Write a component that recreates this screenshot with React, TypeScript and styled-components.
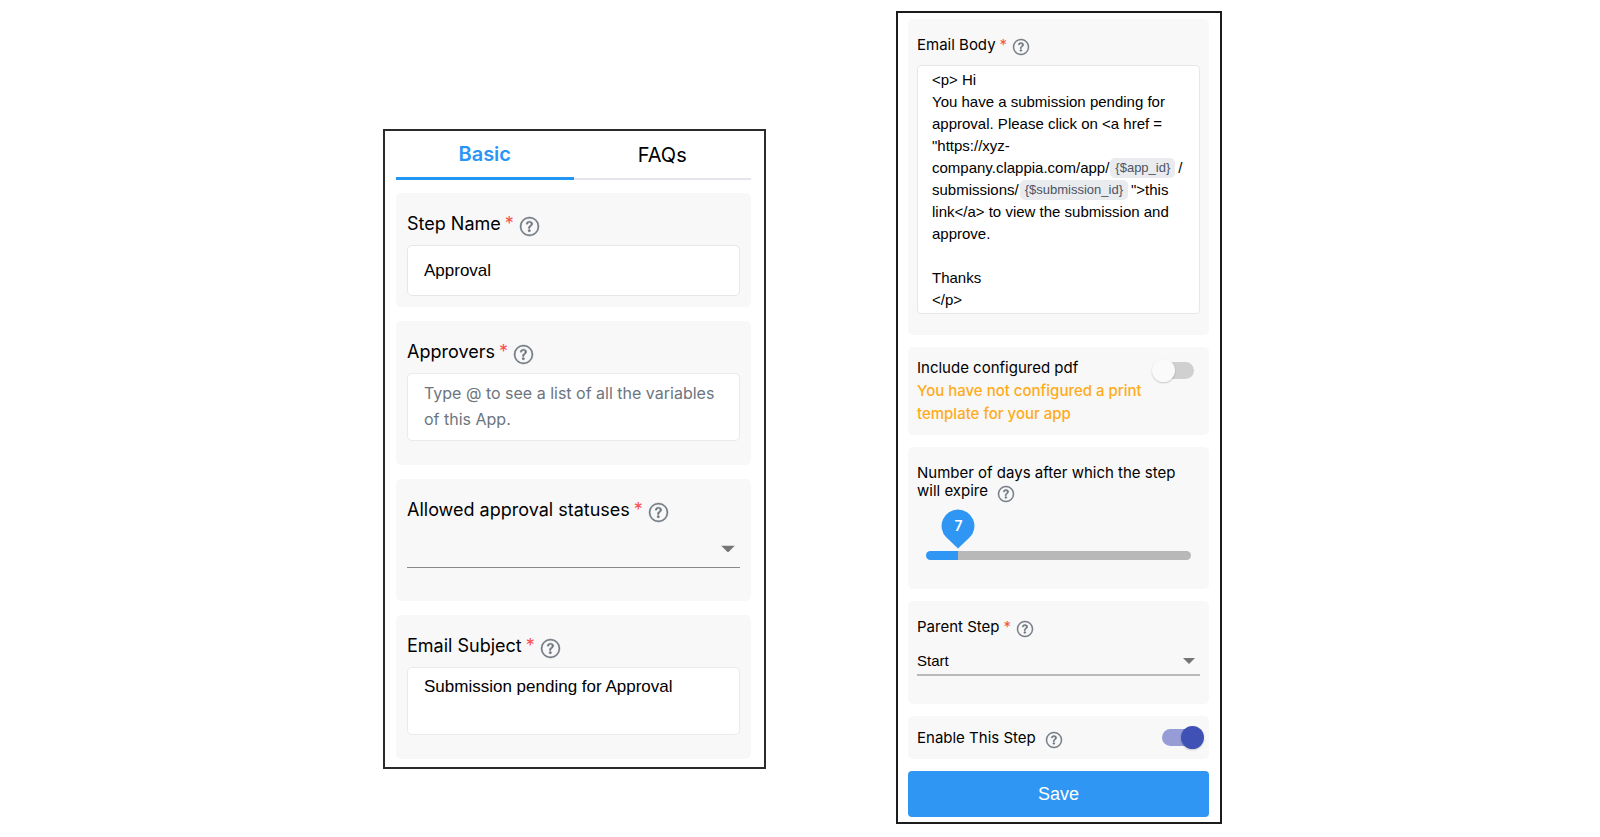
import React, { useState } from 'react';
import styled, { createGlobalStyle } from 'styled-components';
import { BsQuestionCircle } from 'react-icons/bs';

const ui = `Inter, "Open Sans", sans-serif`;
const entry = `"Liberation Sans", Arial, sans-serif`;

const GlobalStyle = createGlobalStyle`
  *, *::before, *::after { box-sizing: border-box; }
  body { margin: 0; background: #fff; color: #000; font-family: ${ui}; }
  button, input, select, textarea { font: inherit; color: inherit; margin: 0; }
`;

const Page = styled.main`
  display: flex;
  justify-content: center;
  align-items: flex-start;
  gap: 130px;
  padding: 11px 0 13px 5px;
`;

const StepPanel = styled.form`
  flex: 0 1 383px;
  margin-top: 118px;
  padding: 0 13px 8px 11px;
  border: 2px solid #2b2b2b;
  font-size: 18px;
`;

const EmailPanel = styled.form`
  flex: 0 1 326px;
  display: flex;
  flex-direction: column;
  gap: 12px;
  padding: 6px 11px 5px 10px;
  border: 2px solid #1c1c1c;
  font-size: 15px;
`;

const TabBar = styled.div`
  display: flex;
  height: 49px;
  margin-bottom: 13px;
`;

const Tab = styled.button<{ $active?: boolean }>`
  flex: 1;
  padding: 0;
  border: 0;
  border-bottom: ${(p) => (p.$active ? '3px solid #2196f3' : '2px solid #e4e6ec')};
  background: none;
  color: ${(p) => (p.$active ? '#2b95f5' : '#000')};
  font-size: 20px;
  font-weight: ${(p) => (p.$active ? 600 : 400)};
  cursor: pointer;
`;

const Stack = styled.div`
  display: flex;
  flex-direction: column;
  gap: 14px;
`;

const Card = styled.section<{ $pad: string }>`
  padding: ${(p) => p.$pad};
  border-radius: 5px;
  background: #f8f8f8;
`;

const LabelRow = styled.div<{ $h: number }>`
  display: flex;
  align-items: center;
  height: ${(p) => p.$h}px;
  margin-bottom: 11px;
`;

const Required = styled.span`
  margin-left: 4px;
  color: #f9504c;
`;

const HelpButton = styled.button<{ $size: number; $gap: number }>`
  display: inline-flex;
  padding: 0;
  margin: 4px 0 -2px ${(p) => p.$gap}px;
  border: 0;
  background: none;
  color: #6c757d;
  font-size: ${(p) => p.$size}px;
  vertical-align: top;
  cursor: pointer;
  svg { overflow: visible; stroke: currentColor; stroke-width: 0.4; }
`;

const TextInput = styled.input`
  display: block;
  width: 100%;
  height: 51px;
  padding: 0 16px;
  border: 1px solid #e6e7e9;
  border-radius: 5px;
  background: #fff;
  font-family: ${entry};
  font-size: 17px;
`;

const TextArea = styled.textarea`
  display: block;
  width: 100%;
  height: 68px;
  padding: 6px 16px;
  border: 1px solid #e9eaec;
  border-radius: 5px;
  background: #fff;
  font-family: ${entry};
  font-size: 17px;
  line-height: 26px;
  resize: none;
  overflow: hidden;
  &::placeholder { color: #6c757d; font-family: ${ui}; font-size: 16px; opacity: 1; }
`;

const BodyEditor = styled.div`
  min-height: 249px;
  padding: 3px 8px 2px 14px;
  border: 1px solid #e6e7e9;
  border-radius: 4px;
  background: #fff;
  font-family: ${entry};
  line-height: 22px;
`;

const Variable = styled.span`
  display: inline-block;
  height: 20px;
  margin: 1px 3px 0 1px;
  padding: 0 5px;
  border-radius: 5px;
  background: #e9ebef;
  color: #4b5563;
  font-size: 13px;
  line-height: 20px;
  vertical-align: top;
`;

const SelectBox = styled.div<{ $h: number; $line: string }>`
  display: flex;
  position: relative;
  height: ${(p) => p.$h}px;
  border-bottom: ${(p) => p.$line};
`;

const Select = styled.select`
  flex: 1;
  min-width: 0;
  padding: 0;
  border: 0;
  background: none;
  appearance: none;
  font-family: ${entry};
`;

const Caret = styled.svg`
  position: absolute;
  top: 50%;
  right: 5px;
  transform: translateY(-50%);
  pointer-events: none;
`;

const SwitchRow = styled.div<{ $align: string }>`
  display: flex;
  justify-content: space-between;
  align-items: ${(p) => p.$align};
`;

const SwitchText = styled.div`
  line-height: 23px;
`;

const Warning = styled.p`
  margin: 0;
  color: #ffab1a;
  font-weight: 500;
`;

const Switch = styled.input`
  && { margin: ${(p) => (p.defaultChecked ? '0' : '3px 6px 0 0')}; }
  flex: none;
  position: relative;
  width: 42px;
  height: 23px;
  appearance: none;
  cursor: pointer;
  &::before {
    content: '';
    position: absolute;
    inset: 3px 0 3px 6px;
    border-radius: 9px;
    background: #d0d0d0;
  }
  &::after {
    content: '';
    position: absolute;
    top: 0;
    left: 0;
    width: 23px;
    height: 23px;
    border-radius: 50%;
    background: #fafafa;
    box-shadow: 0 1px 2px rgba(0, 0, 0, 0.2);
  }
  &:checked::before { inset: 3px 6px 3px 0; background: #959cd6; }
  &:checked::after { left: 19px; background: #3f51b5; }
`;

const DaysRow = styled.div`
  line-height: 18px;
`;

const SliderArea = styled.div`
  position: relative;
  margin: 9px 9px 0;
  padding-top: 42px;
`;

const Slider = styled.input`
  display: block;
  width: 100%;
  height: 9px;
  border-radius: 5px;
  appearance: none;
  cursor: pointer;
  &::-webkit-slider-thumb { appearance: none; width: 1px; height: 9px; }
`;

const Bubble = styled.output`
  position: absolute;
  top: 0;
  width: 34px;
  height: 40px;
  margin-left: -17px;
  color: #fff;
  font-size: 14px;
  font-weight: 600;
  line-height: 34px;
  text-align: center;
  pointer-events: none;
  svg { position: absolute; inset: 0; }
  span { position: relative; }
`;

const SaveButton = styled.button`
  height: 46px;
  border: 0;
  border-radius: 4px;
  background: #2f96f4;
  color: #fff;
  font-family: ${entry};
  font-size: 18px;
  cursor: pointer;
`;

const Help = ({ about, size, gap = 6 }: { about: string; size: number; gap?: number }) => (
  <HelpButton type="button" $size={size} $gap={gap} aria-label={`Help: ${about}`}>
    <BsQuestionCircle />
  </HelpButton>
);

const FieldLabel = ({ id, text, small }: { id: string; text: string; small?: boolean }) => (
  <LabelRow $h={small ? 20 : 22}>
    <label id={`${id}-label`} htmlFor={id}>
      {text}
      <Required>*</Required>
    </label>
    <Help about={text} size={small ? 16 : 19} />
  </LabelRow>
);

const DropArrow = ({ width }: { width: number }) => (
  <Caret width={width} height={width / 2} viewBox="0 0 12 6" aria-hidden="true">
    <path d="M0 0h12L6 6z" fill="#757575" />
  </Caret>
);

export default function App() {
  const [tab, setTab] = useState('Basic');
  const [days, setDays] = useState(7);
  const portion = `${((days - 1) / 49) * 100}%`;

  return (
    <>
      <GlobalStyle />
      <Page>
        <StepPanel>
          <TabBar role="tablist">
            {['Basic', 'FAQs'].map((name) => (
              <Tab
                key={name}
                type="button"
                role="tab"
                aria-selected={tab === name}
                $active={tab === name}
                onClick={() => setTab(name)}
              >
                {name}
              </Tab>
            ))}
          </TabBar>
          <Stack>
            <Card $pad="19px 11px 11px">
              <FieldLabel id="step-name" text="Step Name" />
              <TextInput id="step-name" defaultValue="Approval" />
            </Card>
            <Card $pad="19px 11px 24px">
              <FieldLabel id="approvers" text="Approvers" />
              <TextArea
                id="approvers"
                placeholder="Type @ to see a list of all the variables of this App."
              />
            </Card>
            <Card $pad="19px 11px 33px">
              <FieldLabel id="statuses" text="Allowed approval statuses" />
              <SelectBox $h={37} $line="1px solid #8a8a8a">
                <Select id="statuses" defaultValue="">
                  <option value=""></option>
                </Select>
                <DropArrow width={14} />
              </SelectBox>
            </Card>
            <Card $pad="19px 11px 24px">
              <FieldLabel id="subject" text="Email Subject" />
              <TextArea id="subject" defaultValue="Submission pending for Approval" />
            </Card>
          </Stack>
        </StepPanel>

        <EmailPanel>
          <Card $pad="15px 9px 21px">
            <FieldLabel id="body" text="Email Body" small />
            <BodyEditor
              id="body"
              role="textbox"
              aria-multiline="true"
              aria-labelledby="body-label"
              contentEditable
              suppressContentEditableWarning
              spellCheck={false}
            >
              &lt;p&gt; Hi
              <br />
              You have a submission pending for approval. Please click on &lt;a href =
              "https://xyz-
              <br />
              company.clappia.com/app/
              <Variable>{'{$app_id}'}</Variable>/<br />
              submissions/
              <Variable>{'{$submission_id}'}</Variable>"&gt;this
              <br />
              link&lt;/a&gt; to view the submission and approve.
              <br />
              <br />
              Thanks
              <br />
              &lt;/p&gt;
            </BodyEditor>
          </Card>

          <Card $pad="9px 9px 10px">
            <SwitchRow $align="flex-start">
              <SwitchText>
                <label htmlFor="pdf">Include configured pdf</label>
                <Warning>You have not configured a print template for your app</Warning>
              </SwitchText>
              <Switch id="pdf" type="checkbox" />
            </SwitchRow>
          </Card>

          <Card $pad="17px 9px 29px">
            <DaysRow>
              <label htmlFor="days">Number of days after which the step will expire</label>
              <Help about="Number of days" size={16} gap={10} />
            </DaysRow>
            <SliderArea>
              <Slider
                id="days"
                type="range"
                min={1}
                max={50}
                value={days}
                onChange={(e) => setDays(Number(e.target.value))}
                style={{
                  background: `linear-gradient(to right, #2f96f4 ${portion}, #b8b8b8 ${portion})`,
                }}
              />
              <Bubble htmlFor="days" style={{ left: portion }}>
                <svg width="34" height="40" viewBox="0 0 34 40" aria-hidden="true">
                  <path
                    d="M17 0.5a16.4 16.4 0 0 1 11.8 27.8L17 39.5 5.2 28.3A16.4 16.4 0 0 1 17 .5z"
                    fill="#2f96f4"
                  />
                </svg>
                <span>{days}</span>
              </Bubble>
            </SliderArea>
          </Card>

          <Card $pad="15px 9px 28px">
            <FieldLabel id="parent" text="Parent Step" small />
            <SelectBox $h={29} $line="2px solid #b9b9b9">
              <Select id="parent" defaultValue="Start">
                <option>Start</option>
              </Select>
              <DropArrow width={12} />
            </SelectBox>
          </Card>

          <Card $pad="10px 5px 10px 9px">
            <SwitchRow $align="center">
              <div>
                <label htmlFor="enable">Enable This Step</label>
                <Help about="Enable This Step" size={16} gap={10} />
              </div>
              <Switch id="enable" type="checkbox" defaultChecked />
            </SwitchRow>
          </Card>

          <SaveButton type="button">Save</SaveButton>
        </EmailPanel>
      </Page>
    </>
  );
}
